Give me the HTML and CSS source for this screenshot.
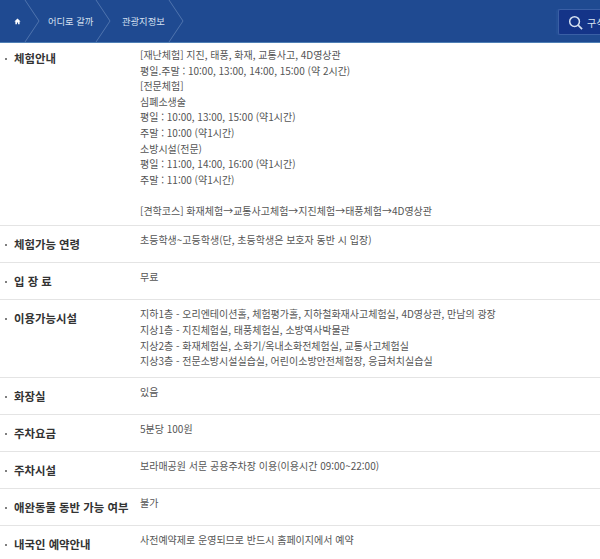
FILE: index.html
```html
<!DOCTYPE html>
<html lang="ko">
<head>
<meta charset="utf-8">
<title>체험안내</title>
<link rel="stylesheet" href="styles.css">
</head>
<body>
<header class="topbar">
  <nav class="crumbs">
    <div class="crumb home">
      <svg class="home-icon" viewBox="0 0 10 10" width="7" height="7"><path d="M5 .8 .6 5h1.4v4h2.2V6.4h1.6V9H8V5h1.4z" fill="#fff"/></svg>
      <svg class="chev" viewBox="0 0 16 42" width="16" height="42"><path d="M1 0 15 21 1 42" fill="none" stroke="#4f74ad" stroke-width="1"/></svg>
    </div>
    <div class="crumb first"><span>어디로 갈까</span>
      <svg class="chev" viewBox="0 0 16 42" width="16" height="42"><path d="M1 0 15 21 1 42" fill="none" stroke="#4f74ad" stroke-width="1"/></svg>
    </div>
    <div class="crumb second"><span>관광지정보</span>
      <svg class="chev" viewBox="0 0 16 42" width="16" height="42"><path d="M1 0 15 21 1 42" fill="none" stroke="#4f74ad" stroke-width="1"/></svg>
    </div>
  </nav>
  <div class="search">
    <svg viewBox="0 0 16 16" width="15" height="15"><circle cx="7" cy="7" r="5.2" fill="none" stroke="#d5e0f0" stroke-width="1.6"/><path d="M10.8 10.8 15 15" stroke="#d5e0f0" stroke-width="1.8"/></svg>
    <span>구석구석</span>
  </div>
</header>
<main class="info">
  <section class="row">
    <h3 class="label">체험안내</h3>
    <div class="value">
      <p>[재난체험] 지진, 태풍, 화재, 교통사고, 4D영상관</p>
      <p>평일.주말 : 10:00, 13:00, 14:00, 15:00 (약 2시간)</p>
      <p>[전문체험]</p>
      <p>심폐소생술</p>
      <p>평일 : 10:00, 13:00, 15:00 (약1시간)</p>
      <p>주말 : 10:00 (약1시간)</p>
      <p>소방시설(전문)</p>
      <p>평일 : 11:00, 14:00, 16:00 (약1시간)</p>
      <p>주말 : 11:00 (약1시간)</p>
      <p>&nbsp;</p>
      <p>[견학코스] 화재체험→교통사고체험→지진체험→태풍체험→4D영상관</p>
    </div>
  </section>
  <section class="row">
    <h3 class="label">체험가능 연령</h3>
    <div class="value"><p>초등학생~고등학생(단, 초등학생은 보호자 동반 시 입장)</p></div>
  </section>
  <section class="row">
    <h3 class="label">입 장 료</h3>
    <div class="value"><p>무료</p></div>
  </section>
  <section class="row">
    <h3 class="label">이용가능시설</h3>
    <div class="value">
      <p>지하1층 - 오리엔테이션홀, 체험평가홀, 지하철화재사고체험실, 4D영상관, 만남의 광장</p>
      <p>지상1층 - 지진체험실, 태풍체험실, 소방역사박물관</p>
      <p>지상2층 - 화재체험실, 소화기/옥내소화전체험실, 교통사고체험실</p>
      <p>지상3층 - 전문소방시설실습실, 어린이소방안전체험장, 응급처치실습실</p>
    </div>
  </section>
  <section class="row">
    <h3 class="label">화장실</h3>
    <div class="value"><p>있음</p></div>
  </section>
  <section class="row">
    <h3 class="label">주차요금</h3>
    <div class="value"><p>5분당 100원</p></div>
  </section>
  <section class="row">
    <h3 class="label">주차시설</h3>
    <div class="value"><p>보라매공원 서문 공용주차장 이용(이용시간 09:00~22:00)</p></div>
  </section>
  <section class="row">
    <h3 class="label">애완동물 동반 가능 여부</h3>
    <div class="value"><p>불가</p></div>
  </section>
  <section class="row">
    <h3 class="label">내국인 예약안내</h3>
    <div class="value"><p>사전예약제로 운영되므로 반드시 홈페이지에서 예약</p></div>
  </section>
</main>
</body>
</html>
```

FILE: styles.css
```css
* { box-sizing: border-box; }
html, body { margin: 0; padding: 0; }
body {
  width: 600px;
  height: 559px;
  overflow: hidden;
  background: #fff;
  font-family: "Noto Sans CJK KR", "Noto Sans", sans-serif;
  color: #555;
}
.topbar {
  height: 43px;
  background: #1f4a91;
  border-bottom: 1px solid #4f7fb5;
  display: flex;
  justify-content: space-between;
  align-items: flex-start;
  overflow: hidden;
}
.crumbs { display: flex; height: 42px; }
.crumb {
  display: flex;
  align-items: center;
  justify-content: space-between;
  height: 42px;
  color: #d5e0f0;
  font-size: 9.3px;
}
.crumb span { line-height: 42px; }
.chev { display: block; flex: none; }
.home { width: 40px; padding-left: 14px; }
.home-icon { flex: none; }
.first { width: 71px; padding-left: 8px; }
.second { width: 73px; padding-left: 11px; }
.search {
  width: 42px;
  height: 26px;
  margin: 9px 0 0;
  padding-left: 9px;
  display: flex;
  align-items: center;
  gap: 4px;
  background: #143488;
  border: 1px solid #3a5fa5;
  border-right: 0;
  border-radius: 2px 0 0 2px;
  box-shadow: -2px 0 0 #244f96;
  color: #dbe4f2;
  font-size: 10px;
  white-space: nowrap;
  overflow: hidden;
  flex: none;
}
.search svg { flex: none; }
.row {
  display: grid;
  grid-template-columns: 140px 1fr;
  border-bottom: 1px solid #e4e4e4;
  min-height: 37px;
}
.label {
  margin: 0;
  padding: 9px 0 0 14px;
  position: relative;
  font-size: 11.4px;
  font-weight: 700;
  line-height: 18px;
  color: #333;
  white-space: nowrap;
}
.label::before {
  content: "";
  position: absolute;
  left: 5px;
  top: 18px;
  width: 2px;
  height: 2px;
  border-radius: 50%;
  background: #555;
}
.row:first-child .label { padding-top: 6px; }
.row:first-child .label::before { top: 15px; }
.value {
  padding: 6px 0 8.2px;
  font-size: 10px;
  line-height: 15.6px;
  color: #555;
}
.row:first-child .value { padding: 4px 0 6.8px; }
.value p { margin: 0; white-space: nowrap; }
```
